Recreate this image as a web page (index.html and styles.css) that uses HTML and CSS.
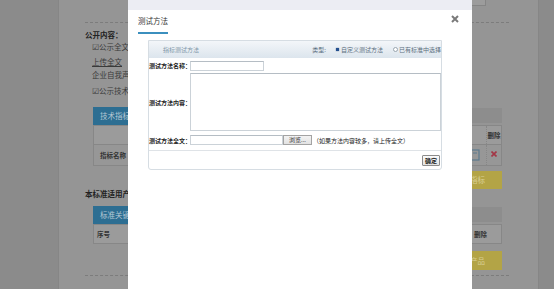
FILE: index.html
```html
<!DOCTYPE html>
<html lang="zh-CN">
<head>
<meta charset="utf-8">
<title>测试方法</title>
<link rel="stylesheet" href="styles.css">
</head>
<body>
<div class="page">
  <div class="topbox"></div>
  <div class="dash dash-top"></div>
  <div class="sec-title">公开内容：</div>
  <ul class="items">
    <li class="i1">☑公示全文</li>
    <li class="i2"><u>上传全文</u></li>
    <li class="i3">企业自我声明</li>
    <li class="i4">☑公示技术指标</li>
  </ul>
  <div class="block b1">
    <div class="tabbar"><span class="tab">技术指标</span></div>
    <div class="trow thead">
      <span class="c1"></span><span class="c-edit"></span><span class="c-del">删除</span>
    </div>
    <div class="trow tbody">
      <span class="c1">指标名称</span>
      <span class="c-edit"><svg class="edit-ic" viewBox="0 0 10 12" width="10" height="12"><rect x="1" y="1" width="8" height="10" fill="none" stroke="#5c7a8e" stroke-width="1.2"/><line x1="3" y1="4" x2="7" y2="4" stroke="#5c7a8e"/></svg></span>
      <span class="c-del"><svg class="del-ic" viewBox="0 0 6 6" width="6" height="6"><path d="M0.5 0.5 L5.5 5.5 M5.5 0.5 L0.5 5.5" stroke="#a33646" stroke-width="1.6"/></svg></span>
    </div>
    <div class="btnrow"><span class="ybtn">添加指标</span></div>
  </div>
  <div class="sec-title s2">本标准适用产品</div>
  <div class="block b2">
    <div class="tabbar"><span class="tab">标准关键词</span></div>
    <div class="trow thead t2">
      <span class="c1">序号</span><span class="c-del2">删除</span>
    </div>
    <div class="btnrow b2btn"><span class="ybtn">添加产品</span></div>
  </div>
  <div class="dash dash-bot"></div>
</div>

<div class="modal">
  <div class="modal-strip"></div>
  <div class="modal-head">
    <h1 class="modal-title">测试方法</h1>
    <svg class="close" viewBox="0 0 8 8" width="8" height="8"><path d="M1 1 L7 7 M7 1 L1 7" stroke="#7a7a7a" stroke-width="2"/></svg>
  </div>
  <div class="panel">
    <div class="panel-head">
      <span class="ph-title">指标测试方法</span>
      <span class="ph-type">
        <span class="type-lbl">类型:</span>
        <span class="radio on"></span><span class="opt">自定义测试方法</span>
        <span class="radio off"></span><span class="opt">已有标准中选择</span>
      </span>
    </div>
    <div class="form">
      <div class="row r1">
        <label class="lbl">测试方法名称：</label>
        <input class="ipt name" type="text">
      </div>
      <div class="row r2">
        <label class="lbl">测试方法内容：</label>
        <textarea class="area"></textarea>
      </div>
      <div class="row r3">
        <label class="lbl">测试方法全文：</label>
        <span class="ipt file"></span>
        <span class="browse">浏览...</span>
        <span class="hint">（如果方法内容较多，请上传全文）</span>
      </div>
    </div>
    <div class="panel-foot"><button class="ok" type="button">确定</button></div>
  </div>
</div>
</body>
</html>
```
FILE: styles.css
```css
* { box-sizing: border-box; }
html, body { margin: 0; padding: 0; }
body {
  width: 554px;
  height: 289px;
  overflow: hidden;
  background: #8b8b8b;
  font-family: "Noto Sans CJK SC", "Noto Sans", sans-serif;
  position: relative;
}

/* ---------- background page (dimmed) ---------- */
.page {
  margin-left: 58px;
  width: 481px;
  height: 289px;
  background: #959595;
  border-left: 1px solid #868686;
  border-right: 1px solid #868686;
  padding-left: 26px;
}
.topbox {
  margin-left: 385px;
  width: 16px;
  height: 6px;
  border: 1px solid #858585;
  border-top: none;
  background: #9c9c9c;
}
.dash { width: 424px; border-top: 1px dashed #7c7c7c; }
.dash-top { margin-top: 16px; }
.dash-bot { margin-top: 5px; }
.sec-title {
  margin-top: 7px;
  font-size: 7.5px;
  line-height: 10px;
  height: 10px;
  font-weight: 700;
  color: #222;
  white-space: nowrap;
}
.sec-title.s2 { margin-top: 0; }
.items {
  list-style: none;
  margin: 0;
  padding: 0 0 0 7px;
  font-size: 7.5px;
  color: #3a3a3a;
}
.items li { line-height: 13px; height: 13px; white-space: nowrap; }
.items .i2 { margin-top: 2px; }
.items .i4 { margin-top: 3px; }

.block { margin-left: 8px; width: 409px; }
.b1 { margin-top: 10px; }
.b2 { margin-top: 7px; }
.tabbar {
  height: 18px;
  font-size: 0;
  background: linear-gradient(transparent 0 1px, #8d8d8d 1px 16px, transparent 16px);
}
.tab {
  display: inline-block;
  height: 18px;
  line-height: 18px;
  padding: 0 7px;
  background: #2d6e92;
  color: #b6c8d4;
  font-size: 7.5px;
}
.trow {
  display: flex;
  align-items: stretch;
  height: 20px;
  border: 1px solid #878787;
  background: #9b9b9b;
  font-size: 6.5px;
  font-weight: 700;
  color: #333;
}
.trow.tbody { height: 21px; border-top: none; background: #979797; }
.c1 { flex: 1; padding-left: 6px; display: flex; align-items: center; }
.t2 .c1 { padding-left: 3px; }
.c-edit {
  width: 21px;
  border-left: 1px dotted #878787;
  display: flex;
  align-items: center;
  padding-left: 4px;
}
.c-del {
  width: 15px;
  border-left: 1px dotted #878787;
  display: flex;
  align-items: center;
  justify-content: center;
}
.c-del2 {
  width: 31px;
  display: flex;
  align-items: center;
  padding-left: 4px;
}
.tbody .c-del { padding-bottom: 3px; }
.edit-ic, .del-ic { display: block; }
.btnrow { display: flex; justify-content: flex-end; margin-top: 5px; }
.b2btn { margin-top: 7px; }
.ybtn {
  width: 80px;
  height: 18px;
  line-height: 18px;
  background: #b3a446;
  color: #d9cf95;
  font-size: 7.5px;
  text-align: right;
  padding-right: 17px;
}
.b2btn .ybtn { height: 19px; line-height: 19px; }

/* ---------- modal ---------- */
.modal {
  position: absolute;
  left: 128px;
  top: 0;
  width: 344px;
  height: 289px;
  background: #fff;
}
.modal-strip { height: 10px; background: #ecedf3; }
.modal-head {
  display: flex;
  justify-content: space-between;
  align-items: flex-start;
  height: 24px;
  padding: 0 13px 0 10px;
}
.modal-title {
  margin: 6px 0 0;
  width: 30px;
  height: 18px;
  padding-bottom: 6px;
  font-size: 7.5px;
  line-height: 10px;
  font-weight: 400;
  color: #333;
  white-space: nowrap;
  border-bottom: 2px solid #3b8fbe;
}
.close { display: block; margin-top: 5px; }

.panel {
  margin: 6px 0 0 20px;
  width: 294px;
  border: 1px solid #d6dde3;
  border-radius: 0 0 3px 3px;
}
.panel-head {
  height: 17px;
  display: flex;
  align-items: center;
  padding-left: 14px;
  background: linear-gradient(#f3f6f9, #dce5ed);
  font-size: 6px;
  color: #8096a8;
  white-space: nowrap;
  overflow: visible;
}
.ph-type {
  margin-left: auto;
  display: flex;
  align-items: center;
  color: #5b6e7e;
}
.radio {
  width: 5px;
  height: 5px;
  border-radius: 50%;
  margin-left: 9px;
  margin-right: 1px;
  flex: none;
}
.radio.on { background: radial-gradient(circle, #24508f 0 1.6px, #c9d4e0 1.8px); }
.radio.off { margin-left: 10px; border: 1px solid #9aa6b0; background: #fff; }

.row { display: flex; align-items: center; }
.r1 { height: 15px; }
.r2 { height: 58px; }
.r3 { height: 20px; border-bottom: 1px solid #dfe3e7; padding-bottom: 1px; }
.lbl {
  width: 41px;
  flex: none;
  font-size: 6px;
  font-weight: 700;
  color: #222;
  white-space: nowrap;
  overflow: visible;
}
.ipt {
  display: block;
  height: 10px;
  border: 1px solid #cbd2d8;
  border-top-color: #b5bdc4;
  background: #fff;
  padding: 0;
  margin: 0;
  outline: none;
}
.name { width: 74px; }
.file { width: 93px; }
.area {
  display: block;
  width: 251px;
  height: 58px;
  border: 1px solid #cbd2d8;
  border-top-color: #b5bdc4;
  resize: none;
  padding: 0;
  margin: 0;
  background: #fff;
}
.browse {
  width: 29px;
  height: 10px;
  border: 1px solid #a3a3a3;
  background: linear-gradient(#f3f3f3, #e2e2e2);
  font-size: 6px;
  line-height: 8px;
  text-align: center;
  color: #333;
}
.hint {
  margin-left: 1px;
  font-size: 6px;
  color: #222;
  white-space: nowrap;
}
.panel-foot {
  height: 18px;
  display: flex;
  justify-content: flex-end;
  align-items: center;
  padding-right: 1px;
}
.ok {
  width: 18px;
  height: 11px;
  padding: 0;
  border: 1px solid #8c8c8c;
  border-radius: 1px;
  background: linear-gradient(#fbfbfb, #e2e2e2);
  font-family: "Noto Sans CJK SC", sans-serif;
  font-size: 6px;
  line-height: 9px;
  font-weight: 700;
  color: #222;
}
```
